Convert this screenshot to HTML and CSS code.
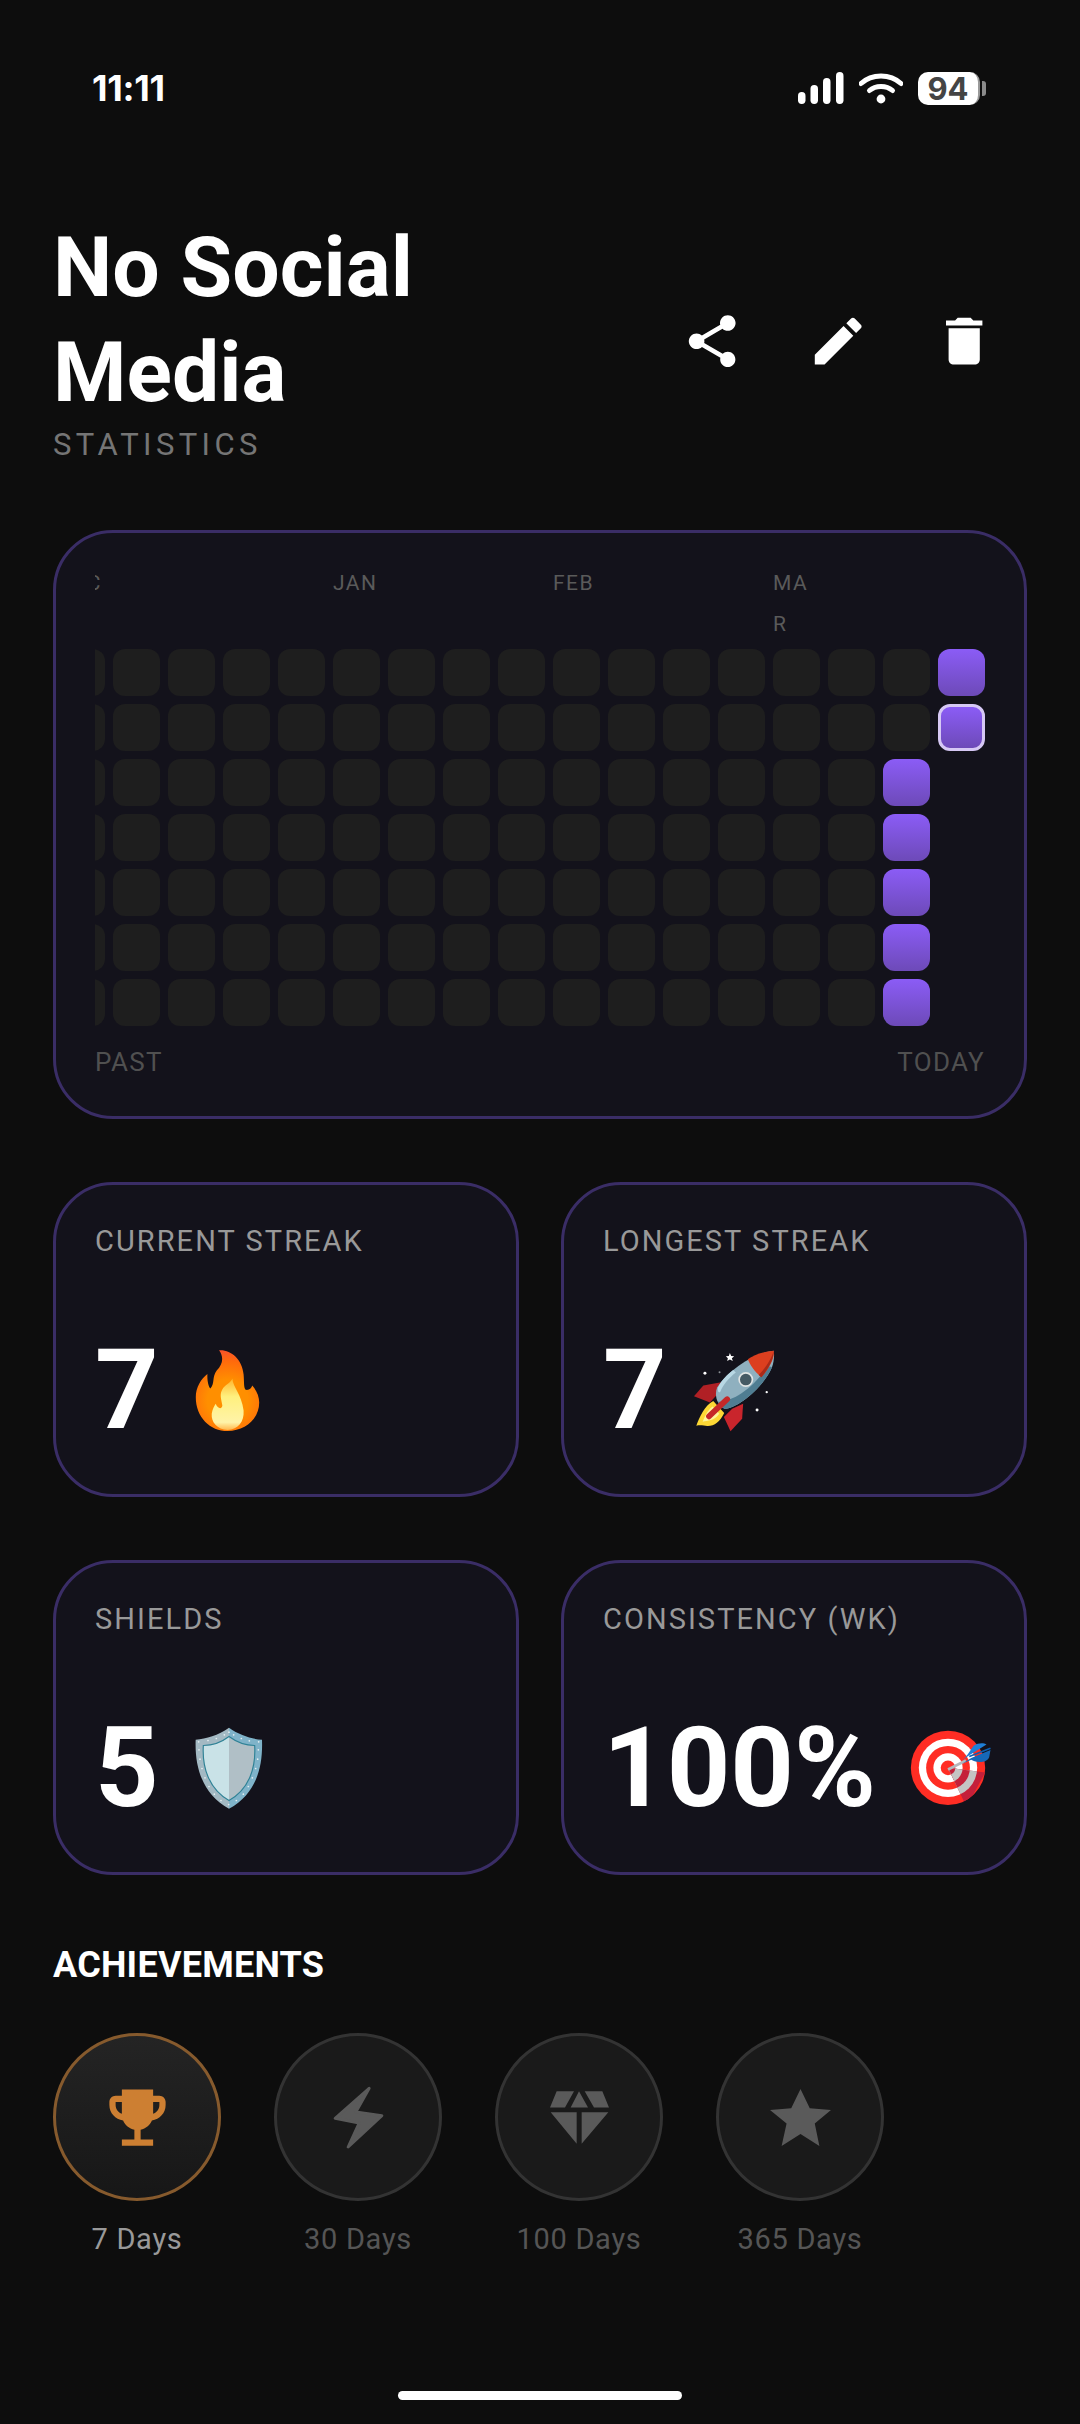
FILE: index.html
```html
<!DOCTYPE html>
<html lang="en">
<head>
<meta charset="utf-8">
<title>No Social Media – Statistics</title>
<link rel="stylesheet" href="styles.css">
</head>
<body>
<main class="app">
  <div class="status">
    <span class="time">11:11</span>
    <div class="status-right">
      <svg class="signal" viewBox="0 0 46 33"><rect x="0" y="20" width="7.5" height="12" rx="3.7"/><rect x="12.5" y="13" width="7.5" height="19" rx="3.7"/><rect x="25" y="6" width="7.5" height="26" rx="3.7"/><rect x="38" y="0" width="7.5" height="32" rx="3.7"/></svg>
      <svg class="wifi" viewBox="0 0 44 32"><path d="M2 11.5C13 1.5 31 1.5 42 11.5" fill="none" stroke="#fff" stroke-width="5" stroke-linecap="round"/><path d="M10.5 18.5C16.5 13 27.5 13 33.5 18.5" fill="none" stroke="#fff" stroke-width="5" stroke-linecap="round"/><circle cx="22" cy="27" r="4.4" fill="#fff"/></svg>
      <div class="battery"><span class="battery-level">94</span><i class="battery-nub"></i></div>
    </div>
  </div>

  <header class="head">
    <div class="head-text">
      <h1 class="title">No Social Media</h1>
      <div class="subtitle">STATISTICS</div>
    </div>
    <div class="actions">
      <div class="action"><svg class="action-icon" viewBox="0 0 24 24"><path d="M18 16.08c-.76 0-1.44.3-1.96.77L8.91 12.7c.05-.23.09-.46.09-.7s-.04-.47-.09-.7l7.05-4.11c.54.5 1.25.81 2.04.81 1.66 0 3-1.34 3-3s-1.34-3-3-3-3 1.34-3 3c0 .24.04.47.09.7L8.04 9.81C7.5 9.31 6.79 9 6 9c-1.66 0-3 1.34-3 3s1.34 3 3 3c.79 0 1.5-.31 2.04-.81l7.12 4.16c-.05.21-.08.43-.08.65 0 1.61 1.31 2.92 2.92 2.92 1.61 0 2.92-1.31 2.92-2.92s-1.31-2.92-2.92-2.92z"/></svg></div>
      <div class="action"><svg class="action-icon" viewBox="0 0 24 24"><path d="M3 17.25V21h3.75L17.81 9.94l-3.75-3.75L3 17.25zM20.71 7.04c.39-.39.39-1.02 0-1.41l-2.34-2.34c-.39-.39-1.02-.39-1.41 0l-1.83 1.83 3.75 3.75 1.83-1.83z"/></svg></div>
      <div class="action"><svg class="action-icon" viewBox="0 0 24 24"><path d="M6 19c0 1.1.9 2 2 2h8c1.1 0 2-.9 2-2V7H6v12zM19 4h-3.5l-1-1h-5l-1 1H5v2h14V4z"/></svg></div>
    </div>
  </header>

  <section class="card heat">
    <div class="months">
      <span class="month m-dec">DEC</span>
      <span class="month m-jan">JAN</span>
      <span class="month m-feb">FEB</span>
      <span class="month m-mar">MAR</span>
    </div>
    <div class="cells">
      <i></i><i></i><i></i><i></i><i></i><i></i><i></i>
      <i></i><i></i><i></i><i></i><i></i><i></i><i></i>
      <i></i><i></i><i></i><i></i><i></i><i></i><i></i>
      <i></i><i></i><i></i><i></i><i></i><i></i><i></i>
      <i></i><i></i><i></i><i></i><i></i><i></i><i></i>
      <i></i><i></i><i></i><i></i><i></i><i></i><i></i>
      <i></i><i></i><i></i><i></i><i></i><i></i><i></i>
      <i></i><i></i><i></i><i></i><i></i><i></i><i></i>
      <i></i><i></i><i></i><i></i><i></i><i></i><i></i>
      <i></i><i></i><i></i><i></i><i></i><i></i><i></i>
      <i></i><i></i><i></i><i></i><i></i><i></i><i></i>
      <i></i><i></i><i></i><i></i><i></i><i></i><i></i>
      <i></i><i></i><i></i><i></i><i></i><i></i><i></i>
      <i></i><i></i><i></i><i></i><i></i><i></i><i></i>
      <i></i><i></i><i></i><i></i><i></i><i></i><i></i>
      <i></i><i></i><i class="on"></i><i class="on"></i><i class="on"></i><i class="on"></i><i class="on"></i>
      <i class="on"></i><i class="on today"></i>
    </div>
    <div class="heat-foot"><span>PAST</span><span>TODAY</span></div>
  </section>

  <section class="stats">
    <article class="card stat">
      <div class="stat-label">CURRENT STREAK</div>
      <div class="stat-value"><span>7</span>
        <svg class="emoji e-fire" viewBox="460 565 195 250">
          <defs>
            <radialGradient id="fa" gradientUnits="userSpaceOnUse" cx="558" cy="720" r="175"><stop offset="0.35" stop-color="#ff8f00"/><stop offset="0.68" stop-color="#ff6a0c"/><stop offset="1" stop-color="#f4413f"/></radialGradient>
            <linearGradient id="fb" x1="0" y1="0" x2="0" y2="1"><stop offset="0" stop-color="#ffb52e"/><stop offset="0.35" stop-color="#fff07e"/><stop offset="0.85" stop-color="#fff3a8"/><stop offset="1" stop-color="#ffb84d"/></linearGradient>
          </defs>
          <path fill="url(#fa)" d="M532 569C566 566 602 595 606 642C608 664 606 682 612 688C624 690 630 682 632 675C645 690 653 708 653 726C653 776 610 812 558 812C505 812 462 770 462 710C462 680 478 654 497 640C496 660 500 678 506 684C520 670 510 650 525 630C545 610 546 588 532 569Z"/>
          <path fill="url(#fb)" d="M572 654C574 680 600 702 606 750C608 785 590 806 558 809C526 807 508 786 510 760C512 746 518 736 522 730C528 745 540 748 542 735C538 712 532 700 545 682C555 670 568 666 572 654Z"/>
        </svg>
      </div>
    </article>
    <article class="card stat">
      <div class="stat-label">LONGEST STREAK</div>
      <div class="stat-value"><span>7</span>
        <svg class="emoji e-rocket" viewBox="428 565 248 250">
          <path fill="#b02025" d="M512 665L458 675L430 707L478 726L502 700Z"/>
          <path fill="#c9252c" d="M578 730L575 775L540 813L520 770L545 745Z"/>
          <path fill="#fdd835" d="M488 722C462 735 447 770 437 796C452 793 460 797 470 797C490 798 508 785 521 758Z"/>
          <path fill="#fff59d" d="M486 738C470 750 462 770 456 784C472 780 490 782 506 760Z"/>
          <path fill="#8fb0bf" d="M670 570C620 575 540 620 500 680C490 705 500 735 522 745C560 745 640 680 665 620C672 600 672 580 670 570Z"/>
          <path fill="#4f7d92" d="M665 620C640 680 560 745 522 745C512 740 505 732 502 724C545 725 615 680 650 615Z"/>
          <path fill="#b8d8e4" d="M548 628C528 644 510 662 502 682C500 694 506 700 510 692C516 676 535 652 556 636Z"/>
          <path fill="#dc3f1f" d="M670 570C640 572 610 582 592 596C605 625 620 640 633 650C655 625 675 590 670 570Z"/>
          <path fill="#a92a18" d="M670 570C672 590 655 625 633 650C630 648 628 646 625 643C648 620 665 590 670 570Z"/>
          <circle cx="586" cy="657" r="20" fill="#455a64" stroke="#e0e4e4" stroke-width="5"/>
          <path fill="none" stroke="#c62828" stroke-width="17" stroke-linecap="round" d="M475 768L530 716"/>
          <path fill="#fff" d="M538 577L542 586L551 587L544 593L547 601L538 597L530 601L532 593L526 587L535 586Z"/>
          <circle cx="463" cy="638" r="4.5" fill="#fff"/><circle cx="507" cy="635" r="3" fill="#8a8f94"/><circle cx="649" cy="695" r="3.5" fill="#fff"/><circle cx="620" cy="749" r="4.5" fill="#fff"/>
        </svg>
      </div>
    </article>
    <article class="card stat">
      <div class="stat-label">SHIELDS</div>
      <div class="stat-value"><span>5</span>
        <svg class="emoji e-shield" viewBox="456 530 204 248">
          <path fill="#a3b9c3" d="M558 532C525 555 490 565 458 568C455 650 478 730 558 775Z"/>
          <path fill="#7fb3c9" d="M558 532C590 555 625 565 657 568C660 650 640 730 558 775Z"/>
          <path fill="#c9e2e7" d="M558 558C532 578 507 585 481 585C477 650 497 715 558 750Z"/>
          <path fill="#b0bfc6" d="M558 558C585 578 610 585 635 585C639 650 620 715 558 750Z"/>
          <path fill="none" stroke="#2f8296" stroke-width="3.5" d="M558 558C585 578 610 585 635 585C639 650 620 715 558 750C497 715 477 650 481 585C507 585 532 578 558 558Z"/>
          <g fill="#e4eef0">
            <circle cx="558" cy="545" r="2.6"/><circle cx="544" cy="553" r="2.6"/><circle cx="572" cy="553" r="2.6"/><circle cx="520" cy="564" r="2.6"/><circle cx="595" cy="564" r="2.6"/><circle cx="495" cy="570" r="2.6"/><circle cx="619" cy="571" r="2.6"/><circle cx="467" cy="574" r="2.6"/><circle cx="647" cy="574" r="2.6"/><circle cx="468" cy="598" r="2.6"/><circle cx="646" cy="598" r="2.6"/><circle cx="471" cy="626" r="2.6"/><circle cx="644" cy="626" r="2.6"/><circle cx="477" cy="654" r="2.6"/><circle cx="638" cy="654" r="2.6"/><circle cx="486" cy="682" r="2.6"/><circle cx="628" cy="682" r="2.6"/><circle cx="498" cy="708" r="2.6"/><circle cx="616" cy="708" r="2.6"/><circle cx="514" cy="731" r="2.6"/><circle cx="601" cy="731" r="2.6"/><circle cx="534" cy="750" r="2.6"/><circle cx="580" cy="750" r="2.6"/><circle cx="557" cy="762" r="2.6"/>
          </g>
        </svg>
      </div>
    </article>
    <article class="card stat">
      <div class="stat-label">CONSISTENCY (WK)</div>
      <div class="stat-value"><span>100%</span>
        <svg class="emoji e-target" viewBox="1070 538 246 229">
          <defs><clipPath id="tw"><path d="M1184 652L1296 666L1240 770Z"/></clipPath></defs>
          <circle cx="1184" cy="652" r="112" fill="#ff2d24"/><circle cx="1184" cy="652" r="88" fill="#fff"/><circle cx="1184" cy="652" r="66" fill="#ff2d24"/><circle cx="1184" cy="652" r="44" fill="#fff"/><circle cx="1184" cy="652" r="22" fill="#ff2d24"/>
          <g clip-path="url(#tw)"><circle cx="1184" cy="652" r="112" fill="#c4203a"/><circle cx="1184" cy="652" r="88" fill="#c4c4c4"/><circle cx="1184" cy="652" r="66" fill="#c4203a"/><circle cx="1184" cy="652" r="44" fill="#c4c4c4"/><circle cx="1184" cy="652" r="22" fill="#c4203a"/></g>
          <path fill="none" stroke="#b4b8bc" stroke-width="8" d="M1184 657L1238 630"/>
          <path fill="#1f7fd6" d="M1222 632C1240 622 1250 600 1262 585C1275 576 1292 576 1300 582L1248 614Z"/>
          <path fill="#1668b8" d="M1226 640L1254 622L1312 598L1308 620C1300 638 1272 638 1254 628Z"/>
          <path fill="none" stroke="#0d5fb0" stroke-width="5" d="M1248 618L1312 593"/>
        </svg>
      </div>
    </article>
  </section>

  <h2 class="ach-title">ACHIEVEMENTS</h2>
  <section class="badges">
    <div class="badge earned">
      <div class="badge-circle"><svg class="ic-trophy" viewBox="0 0 24 24"><path d="M19 5h-2V3H7v2H5c-1.1 0-2 .9-2 2v1c0 2.55 1.92 4.63 4.39 4.94.63 1.5 1.98 2.63 3.61 2.96V19H7v2h10v-2h-4v-3.1c1.63-.33 2.98-1.46 3.61-2.96C19.08 12.63 21 10.55 21 8V7c0-1.1-.9-2-2-2zM5 8V7h2v3.82C5.84 10.4 5 9.3 5 8zm14 0c0 1.3-.84 2.4-2 2.82V7h2v1z"/></svg></div>
      <div class="badge-label">7 Days</div>
    </div>
    <div class="badge">
      <div class="badge-circle"><svg class="ic-bolt" viewBox="908 464 152 192"><path stroke-linejoin="round" stroke-width="9" d="M1016 474L914 564L986 578L953 650L1054 556L976 545Z"/></svg></div>
      <div class="badge-label">30 Days</div>
    </div>
    <div class="badge">
      <div class="badge-circle"><svg class="ic-diamond" viewBox="238 267 177 158"><path d="M258 267H310L283 316H238ZM325 267L352 316H300ZM342 267H395L415 316H370ZM240 330H318V425ZM333 330H413L333 425Z"/></svg></div>
      <div class="badge-label">100 Days</div>
    </div>
    <div class="badge">
      <div class="badge-circle"><svg class="ic-star" viewBox="898 262 184 172"><path d="M990 262L1018 320L1082 325L1033 366L1047 434L990 398L933 434L948 366L898 325L962 320Z"/></svg></div>
      <div class="badge-label">365 Days</div>
    </div>
  </section>
  <div class="home"></div>
</main>
</body>
</html>
```
FILE: styles.css
```css
* { box-sizing: border-box; }
html, body { margin: 0; padding: 0; }
body { background: #0d0d0d; color: #fff; font-family: Roboto, "Noto Sans", sans-serif; }
.app { width: 1080px; height: 2424px; padding: 0 53px; display: flex; flex-direction: column; position: relative; overflow: hidden; }

.status { height: 36px; margin-top: 70px; padding: 0 0 0 39px; display: flex; justify-content: space-between; align-items: center; }
.time { font-family: Inter, Roboto, sans-serif; font-weight: 700; font-size: 36px; letter-spacing: -0.3px; line-height: 36px; }
.status-right { display: flex; align-items: center; margin-right: 39px; }
.signal { width: 46px; height: 33px; fill: #fff; margin-right: 15px; }
.wifi { width: 44px; height: 32px; margin-right: 15px; }
.battery { position: relative; width: 62px; height: 33px; background: #fff; border-radius: 10px; border-right: 2px solid #9a9a9a; display: flex; align-items: center; justify-content: center; margin-right: 8px; }
.battery-level { font-family: Inter, Roboto, sans-serif; font-weight: 700; font-size: 31px; color: #444; line-height: 33px; }
.battery-nub { position: absolute; left: 64px; top: 9px; width: 4px; height: 15px; background: #8a8a8a; border-radius: 0 3px 3px 0; }

.head { margin-top: 109px; display: flex; align-items: center; justify-content: space-between; }
.head-text { width: 420px; }
.title { margin: 0; font-size: 84px; line-height: 105px; font-weight: 700; }
.subtitle { margin-top: 2px; height: 35px; font-size: 31px; line-height: 36px; letter-spacing: 4.4px; color: #757575; }
.actions { display: flex; margin-top: 5px; }
.action { width: 126px; height: 126px; display: flex; align-items: center; justify-content: center; }
.action-icon { width: 62.4px; height: 62.4px; fill: #fff; }

.card { background: #13121b; border: 3px solid #3a2d66; border-radius: 60px; }

.heat { margin-top: 68px; height: 589px; padding: 30px 39px 0; }
.months, .cells { display: grid; grid-template-columns: repeat(17, 47px); column-gap: 8px; justify-content: end; overflow: hidden; }
.months { height: 86px; }
.month { font-size: 21px; line-height: 41px; letter-spacing: 1.5px; color: #5a5a5a; overflow-wrap: anywhere; }
.m-dec { grid-column: 1; }
.m-jan { grid-column: 6; }
.m-feb { grid-column: 10; }
.m-mar { grid-column: 14; }
.cells { grid-template-rows: repeat(7, 47px); grid-auto-flow: column; row-gap: 8px; }
.cells i { display: block; background: #1e1e1e; border-radius: 12px; }
.cells i.on { background: linear-gradient(180deg, #8b5cf6, #6d4ab8); }
.cells i.today { border: 3px solid #d6c8f5; }
.heat-foot { margin-top: 20px; display: flex; justify-content: space-between; font-size: 26px; line-height: 32px; letter-spacing: 1.3px; color: #505050; }

.stats { margin-top: 63px; display: grid; grid-template-columns: 466px 466px; column-gap: 42px; row-gap: 63px; }
.stat { height: 315px; padding: 38px 39px 0; }
.stat-label { font-size: 29px; line-height: 36px; letter-spacing: 2.05px; color: #999; white-space: nowrap; }
.stat-value { margin-top: 65px; height: 132px; display: flex; align-items: center; font-size: 111px; line-height: 132px; font-weight: 700; }
.emoji { display: block; flex: none; }
.e-fire { width: 65px; height: 83px; margin-left: 36px; }
.e-rocket { width: 83px; height: 83px; margin-left: 26px; }
.e-shield { width: 68px; height: 83px; margin-left: 36px; }
.e-target { width: 82px; height: 76px; margin-left: 34px; }

.ach-title { margin: 66px 0 0; font-size: 36px; line-height: 48px; font-weight: 700; letter-spacing: 0.25px; }
.badges { margin-top: 44px; display: flex; gap: 53px; }
.badge { width: 168px; display: flex; flex-direction: column; align-items: center; }
.badge-circle { width: 168px; height: 168px; border-radius: 50%; background: #1a1a1a; border: 3px solid #333; display: flex; align-items: center; justify-content: center; }
.badge-circle svg { display: block; fill: #5a5a5a; stroke: none; }
.earned .badge-circle { border-color: #865a2d; background: linear-gradient(180deg, #242424, #171717); }
.ic-trophy { width: 75px; height: 75px; }
.earned .ic-trophy { fill: #cd7f32; }
.ic-bolt { width: 51px; height: 64px; stroke: #5a5a5a !important; }
.ic-diamond { width: 59px; height: 53px; }
.ic-star { width: 61px; height: 57px; }
.badge-label { margin-top: 20px; font-size: 29px; line-height: 36px; letter-spacing: 0.7px; color: #555; white-space: nowrap; }
.earned .badge-label { color: #999; }

.home { position: absolute; left: 398px; top: 2391px; width: 284px; height: 9px; border-radius: 5px; background: #fff; }
```
